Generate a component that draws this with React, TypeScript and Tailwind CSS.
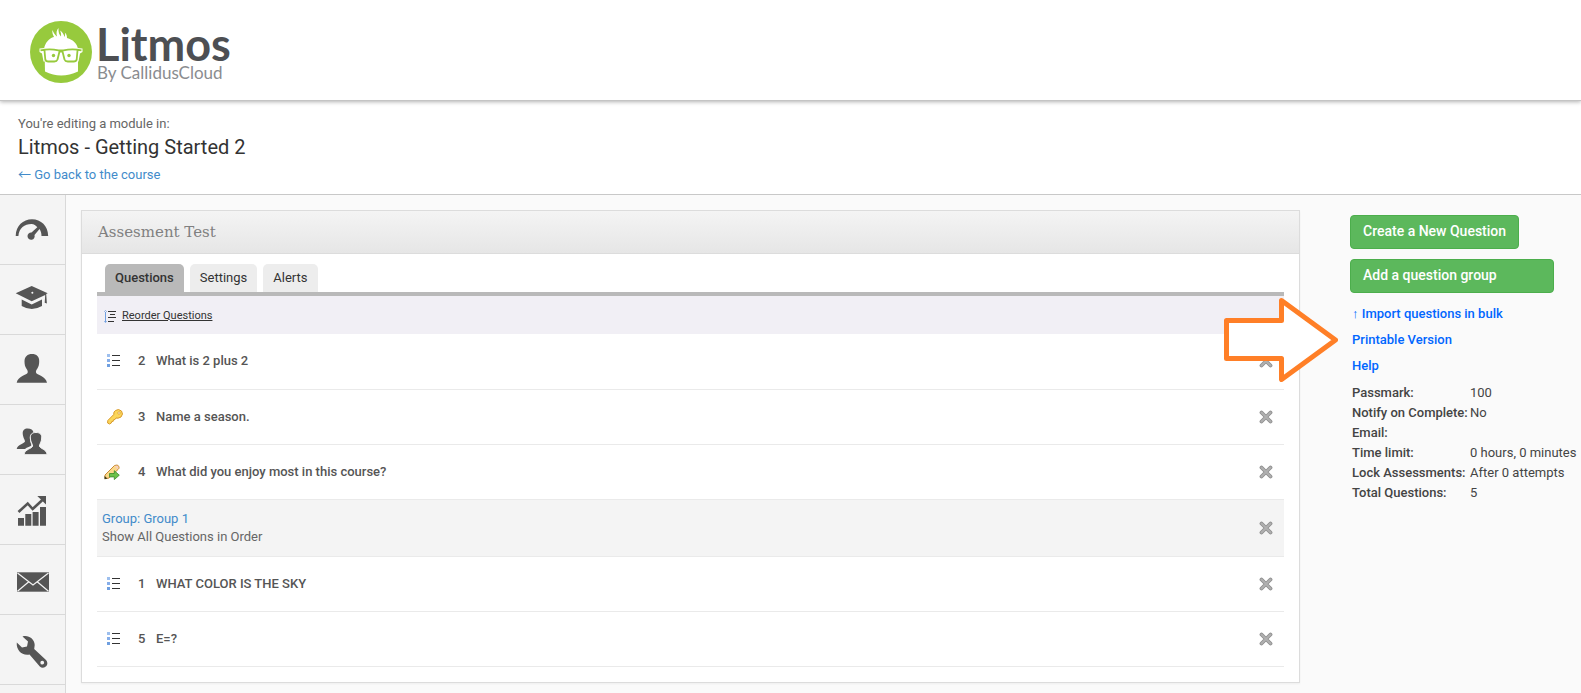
import type { ReactNode } from 'react';
import { clsx } from 'clsx';

type QuestionKind = 'choice' | 'key' | 'essay';

interface Question {
  number: number;
  title: string;
  kind: QuestionKind;
}

const questions: Question[] = [
  { number: 2, title: 'What is 2 plus 2', kind: 'choice' },
  { number: 3, title: 'Name a season.', kind: 'key' },
  { number: 4, title: 'What did you enjoy most in this course?', kind: 'essay' },
];

const groupQuestions: Question[] = [
  { number: 1, title: 'WHAT COLOR IS THE SKY', kind: 'choice' },
  { number: 5, title: 'E=?', kind: 'choice' },
];

const summary = [
  { label: 'Passmark:', value: '100' },
  { label: 'Notify on Complete:', value: 'No' },
  { label: 'Email:', value: '' },
  { label: 'Time limit:', value: '0 hours, 0 minutes' },
  { label: 'Lock Assessments:', value: 'After 0 attempts' },
  { label: 'Total Questions:', value: '5' },
];

// Sidebar icons, all drawn on a 34px grid
const navItems: { label: string; icon: ReactNode }[] = [
  {
    label: 'Dashboard',
    icon: (
      <path d="M.7 24C.9 14 8 7.3 17 7.3S33 14 33.2 24h-6.7c0-3-.7-5-2-7l-5 6a3.6 3.6 0 1 1-3-2.4l5.8-5.4c-1.500-1.800-3.300-3.300-5.800-3.300C9.500 11.900 4 16 3.400 24z" />
    ),
  },
  {
    label: 'Courses',
    icon: (
      <>
        <path
          fillRule="evenodd"
          d="M16.700 4l16 7.300-1.500.8.7 9.400-2.200-.8.500-7.800-13.500 6.400L.7 11.300zM17.300 9.700a1 1 0 1 0 .1 2 1 1 0 0 0-.1-2z"
        />
        <path d="M6.700 17.500l10 5 10.300-5v6.500q-10.300 6-20.300 0z" />
      </>
    ),
  },
  {
    label: 'People',
    icon: (
      <path d="M17 2c4.500 0 7.500 2.500 7.200 7.500 0 3-.6 5-1.800 7-1 1.500-1.700 2.500-1.400 4 .5 2.500 10 3.500 11 10.200H1.700c1-6.700 10.500-7.700 11-10.200.3-1.500-.4-2.500-1.400-4-1.200-2-1.800-4-1.800-7C9.500 4.500 12.500 2 17 2z" />
    ),
  },
  {
    label: 'Teams',
    icon: (
      <>
        <path d="M12.500 6.500c3.500 0 5.500 1.500 6 4-3 1.500-4 4-3.500 7.500.3 2.500 1.500 4 1.300 5.500-.8 1.200-4.300 1.700-6.300 3.500H1.700c.8-4.500 7.300-5 8.300-7.500 0-2-2-3.500-2.300-8 0-3.500 1.800-5 4.800-5z" />
        <path
          className="stroke-[#f4f4f4]"
          d="M21 10.500c4 0 6 2 5.700 5.500-.2 4.500-2.200 6-2.300 8 .6 2.800 7.100 3 7.800 8.700H9c.7-5.700 8-5.900 8.600-8.700 0-2-2-3.500-2.300-8-.2-3.500 1.700-5.500 5.700-5.500z"
        />
      </>
    ),
  },
  {
    label: 'Reports',
    icon: (
      <>
        <path d="M3 26h6v7.700H3zM10.300 22h6v11.700h-6zM17.600 20h6v13.700h-6zM25 15h6v18.700h-6z" />
        <path d="M22.300 4H31v8.500z" />
        <path fill="none" className="stroke-[#555]" strokeWidth="2.600" d="M3.500 20l9.200-8.500 5 5.500L29 6.500" />
      </>
    ),
  },
  {
    label: 'Messages',
    icon: (
      <>
        <path d="M2 10.300h32v19.400H2z" />
        <path
          fill="none"
          className="stroke-[#f4f4f4]"
          strokeWidth="1.200"
          d="M2.500 11L18 23l15.500-12M2.500 29.200L13.500 20M33.500 29.200L22.500 20"
        />
      </>
    ),
  },
  {
    label: 'Settings',
    icon: (
      <path
        fillRule="evenodd"
        d="M7.500 4.500C13 2.500 19.800 7 19.700 13l-.5 4L31 28a4.400 4.400 0 0 1-6.200 6.400L14.500 22.500C7 24 1 18 1.800 10.500L7 15.500l5-1 1-5zM27.200 28.700a1.900 1.900 0 1 0 .1 3.800 1.900 1.900 0 0 0-.1-3.800z"
      />
    ),
  },
];

const Logo = () => (
  <a href="#" className="flex items-center text-[#4d4f53]" aria-label="Litmos home">
    <svg className="h-[62px] w-[62px]" viewBox="0 0 62 62" aria-hidden="true">
      <circle cx="31" cy="31" r="31" fill="#97ca3d" />
      <path
        fill="#fff"
        d="M14 28c1-6 5-11 10-12-1.500-3-2-5-1.500-7 1 3 2.500 5 4.500 6.500C26 12 26.500 9 28.500 7c-.3 4 .8 7 2.500 8.500.3-2 0-4-1-6 2.500 1.500 4 4 4.500 6.500.8-1.500.8-3 .3-4.500 1.700 1.500 2.200 3.500 2.200 5.500C43 18.500 47.500 23 48 28z"
      />
      <path fill="#fff" d="M14.500 27h33.500v23.500q-17 8-33 0z" />
      <path fill="#fff" d="M9.500 27.500q21.500-3 43 0v3.500l-2.500 1.500-1.500 8h-35l-1.500-8-2.500-1.500z" />
      <path
        fill="none"
        stroke="#97ca3d"
        strokeWidth="1.800"
        strokeLinejoin="round"
        d="M10.500 29.300c6-1.300 12-1.300 18 0h5c6-1.300 12-1.300 18 0M14.500 29.500l.8 9q.5 2 3 2h6q2.500 0 3.200-2l2-8h3l2 8q.7 2 3.200 2h6q2.500 0 3-2l.8-9"
      />
      <circle cx="23.500" cy="34.500" r="1.700" fill="#97ca3d" />
      <circle cx="39" cy="34.500" r="1.700" fill="#97ca3d" />
    </svg>
    <span className="flex flex-col pl-1 font-[Lato,sans-serif]">
      <span className="text-[45px] leading-[42px] font-bold">Litmos</span>
      <span className="pl-px text-[17px] leading-4 text-[#8a8c8f]">By CallidusCloud</span>
    </span>
  </a>
);

const KindIcon = ({ kind }: { kind: QuestionKind }) => {
  if (kind === 'key') {
    return (
      <svg className="h-4 w-4" viewBox="0 0 16 16" aria-hidden="true">
        <path
          fill="#fbd65a"
          stroke="#d99a2b"
          d="M8.500 1.500l3-1 3 1.500 1 3-1.500 3-3 1.200-2-.2-1 1.500-1.500.3-.3 1.500-1.500.3-.4 1.400-1.800 1L.6 14l.2-2.500L6.700 5.600l.3-2.500z"
        />
        <circle cx="12" cy="4" r="1.200" fill="#fff" stroke="#d99a2b" strokeWidth=".8" />
      </svg>
    );
  }
  if (kind === 'essay') {
    return (
      <svg className="h-4 w-4" viewBox="0 0 16 16" aria-hidden="true">
        <path fill="#fbd98a" stroke="#c98a35" d="M1 11l9.500-9.500q3-1.500 4.500 1 .5 2-1 3L5 14l-4 .7z" />
        <path fill="#f7cfc0" d="M10.700 2q2.500-1 3.600.8.300 1.500-.8 2.500z" />
        <path fill="#3a3a1a" d="M.5 12v3.200l3-.6z" />
        <path fill="#6cc24a" stroke="#3b8a2a" strokeWidth=".8" d="M5.500 9.500h4.800V6.700l5 4.500-5 4.400v-2.700H5.500z" />
      </svg>
    );
  }
  return (
    <svg className="h-3.5 w-3.5" viewBox="0 0 14 14" aria-hidden="true">
      <path fill="#9dbfee" d="M0 0h3v3H0z" />
      <path fill="#86aeea" d="M0 5h3v3H0z" />
      <path fill="#6f9fe0" d="M0 10h3v3H0z" />
      <path fill="#333" d="M5 1h8v1H5zM5 6h8v1H5zM5 11h8v1H5z" />
    </svg>
  );
};

const DeleteButton = ({ label }: { label: string }) => (
  <button type="button" aria-label={label} className="mr-[11px] shrink-0">
    <svg className="h-3.5 w-3.5" viewBox="0 0 14 14" aria-hidden="true">
      <path stroke="#8f8f8f" strokeWidth="3.800" strokeLinecap="round" d="M2.500 2.500l9 9M11.500 2.500l-9 9" />
      <path stroke="#b0b0b0" strokeWidth="2" strokeLinecap="round" d="M2.500 2.500l9 9M11.500 2.500l-9 9" />
    </svg>
  </button>
);

const QuestionRow = ({ question, first = false }: { question: Question; first?: boolean }) => (
  <li className={clsx('flex items-center border-b border-[#eaeaea]', first ? 'h-14 pb-0.5' : 'h-[55px]')}>
    <span className={clsx('flex w-[41px] shrink-0', question.kind === 'essay' ? 'pl-[7px]' : 'pl-2.5')}>
      <KindIcon kind={question.kind} />
    </span>
    <span className="w-[18px] shrink-0 font-medium">{question.number}</span>
    <span className="flex-1 font-medium">{question.title}</span>
    <DeleteButton label={`Delete question ${question.number}`} />
  </li>
);

const Tab = ({ label, active = false }: { label: string; active?: boolean }) => (
  <button
    type="button"
    role="tab"
    aria-selected={active}
    className={clsx(
      'h-7 rounded-t-[5px] px-2.5 text-[#333]',
      active ? 'bg-[#b9b9b9] font-medium' : 'bg-[#ededed]'
    )}
  >
    {label}
  </button>
);

const QuestionsPanel = () => (
  <section className="min-w-0 flex-1 border border-[#dcdcdc] bg-white shadow-xs">
    <h2 className="h-[43px] border-b border-[#dcdcdc] bg-linear-to-b from-[#f4f4f4] to-[#e6e6e6] px-4 font-['DejaVu_Serif',serif] text-[15px] leading-[42px] text-[#808080]">
      Assesment Test
    </h2>
    <div className="px-[15px] pt-2.5 pb-[15px]">
      <div role="tablist" className="flex gap-1.5 border-b-4 border-[#b9b9b9] px-2">
        <Tab label="Questions" active />
        <Tab label="Settings" />
        <Tab label="Alerts" />
      </div>
      <div className="flex h-[38px] items-center gap-1.5 bg-[#f1eff5] pt-0.5 pl-[7px]">
        <svg className="h-[13px] w-3" viewBox="0 0 12 13" aria-hidden="true">
          <path fill="#6f9fe0" d="M1 1h1v11H1zM0 2h3L1.500 0zM0 11h3l-1.500 2z" />
          <path fill="#333" d="M4 1h8v1H4zM6 4h5v1H6zM4 7h8v1H4zM4 11h6v1H4z" />
        </svg>
        <a href="#" className="text-[11px] text-[#333] underline">
          Reorder Questions
        </a>
      </div>
      <ul>
        {questions.map((question, index) => (
          <QuestionRow key={question.number} question={question} first={index === 0} />
        ))}
        <li className="flex h-[57px] items-center border-b border-[#eaeaea] bg-[#f4f4f4] pl-[5px]">
          <div className="flex-1 leading-[18px]">
            <a href="#" className="text-[#428bca]">
              Group: Group 1
            </a>
            <p className="text-[#666]">Show All Questions in Order</p>
          </div>
          <DeleteButton label="Delete Group 1" />
        </li>
        {groupQuestions.map((question) => (
          <QuestionRow key={question.number} question={question} />
        ))}
      </ul>
    </div>
  </section>
);

const ActionsPanel = () => (
  <aside className="w-[231px] shrink-0 pt-[5px]">
    <div className="flex flex-col items-start gap-2.5 text-sm font-medium text-white">
      <button type="button" className="h-[34px] rounded border border-[#4cae4c] bg-[#5cb85c] px-3 pb-0.5 text-left">
        Create a New Question
      </button>
      <button
        type="button"
        className="h-[34px] w-[204px] rounded border border-[#4cae4c] bg-[#5cb85c] px-3 pb-0.5 text-left"
      >
        Add a question group
      </button>
    </div>
    <ul className="pt-2 pl-0.5 leading-[26px] font-medium text-[#0066ff]">
      <li>
        <a href="#">
          <span className="font-['Liberation_Sans',sans-serif] font-normal">↑</span> Import questions in bulk
        </a>
      </li>
      <li className="relative">
        {/* Callout arrow */}
        <svg
          className="absolute top-1/2 right-full z-10 mr-3.5 h-[84px] w-[114px] -translate-y-1/2"
          viewBox="0 0 114 84"
          aria-hidden="true"
        >
          <path
            fill="#fff"
            stroke="#ff7f27"
            strokeWidth="5"
            strokeLinejoin="round"
            d="M2.500 22.500h55v-20l54 39.500-54 39.500v-21h-55z"
          />
        </svg>
        <a href="#">Printable Version</a>
      </li>
      <li>
        <a href="#">Help</a>
      </li>
    </ul>
    <table className="mt-1 ml-0.5 leading-5 text-[#444]">
      <tbody>
        {summary.map((item) => (
          <tr key={item.label}>
            <th scope="row" className="w-[118px] text-left font-medium whitespace-nowrap">
              {item.label}
            </th>
            <td className="whitespace-nowrap">{item.value}</td>
          </tr>
        ))}
      </tbody>
    </table>
  </aside>
);

const Sidebar = () => (
  <nav className="w-[66px] shrink-0 border-r border-[#d9d9d9] bg-[#f4f4f4]">
    <ul>
      {navItems.map((item) => (
        <li key={item.label} className="h-[70px] border-b border-[#d9d9d9]">
          <a href="#" aria-label={item.label} className="flex h-full items-center justify-center pr-0.5 pb-0.5">
            <svg className="h-[34px] w-[34px] overflow-visible fill-[#555]" viewBox="0 0 34 34" aria-hidden="true">
              {item.icon}
            </svg>
          </a>
        </li>
      ))}
    </ul>
  </nav>
);

export default function App() {
  return (
    <div className="flex min-h-screen flex-col bg-[#fafafa] font-[Roboto,sans-serif] text-[13px] text-[#555]">
      <header className="relative flex h-[101px] items-center border-b border-[#c4c4c4] bg-white px-[30px] pt-1 shadow-[0_1px_4px_rgba(0,0,0,0.3)]">
        <Logo />
      </header>
      <div className="h-[94px] border-b border-[#c8c8c8] bg-white px-[18px] pt-[13px]">
        <p className="leading-5 text-[#666]">You're editing a module in:</p>
        <h1 className="text-xl leading-[26px] text-[#333]">Litmos - Getting Started 2</h1>
        <a href="#" className="leading-[30px] text-[#428bca]">
          <span className="font-['Noto_Sans_CJK_JP',sans-serif] leading-none">←</span> Go back to the course
        </a>
      </div>
      <div className="flex flex-1">
        <Sidebar />
        <main className="flex min-w-0 flex-1 items-start gap-[50px] pt-[15px] pb-2.5 pl-[15px]">
          <QuestionsPanel />
          <ActionsPanel />
        </main>
      </div>
    </div>
  );
}
